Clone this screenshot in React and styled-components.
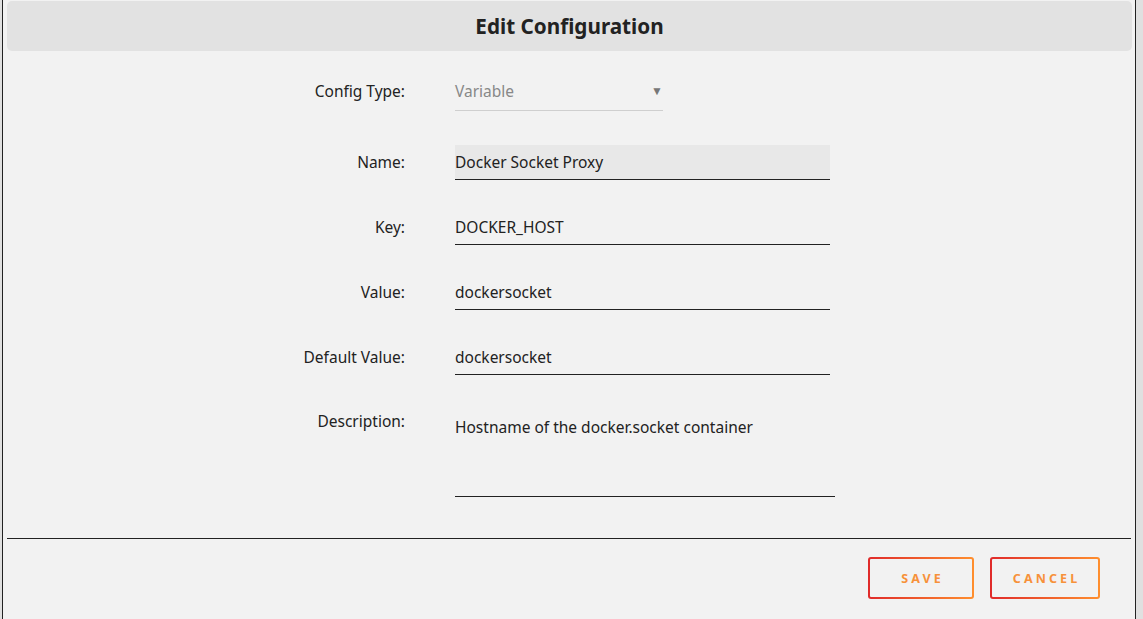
import React from "react";
import styled, { createGlobalStyle } from "styled-components";

const Global = createGlobalStyle`
  html, body { margin: 0; padding: 0; background: #e0e0e0; }
  body { font-family: "Noto Sans", "Liberation Sans", sans-serif; color: #222; }
  * { box-sizing: border-box; }
`;

const Dialog = styled.div`
  margin-left: 2px;
  width: 1134px;
  height: 619px;
  background: #f2f2f2;
  border-left: 1px solid #222;
  border-right: 1px solid #222;
  padding: 1px 3px 0 4px;
  display: flex;
  flex-direction: column;
`;

const Header = styled.div`
  height: 50px;
  flex-shrink: 0;
  background: #e2e2e2;
  border-radius: 5px;
  display: flex;
  align-items: center;
  justify-content: center;
  font-size: 20.7px;
  font-weight: 700;
  color: #222;
`;

const Form = styled.div`
  display: grid;
  grid-template-columns: 398px auto;
  column-gap: 50px;
  row-gap: 30px;
  align-items: center;
  justify-items: start;
  padding-top: 25px;
  height: 487px;
  flex-shrink: 0;
  align-content: start;
`;

const Label = styled.div`
  justify-self: end;
  font-size: 15.5px;
  line-height: 21px;
  color: #222;
  align-self: ${(p) => (p.$top != null ? "start" : "center")};
  padding-top: ${(p) => (p.$top != null ? `${p.$top}px` : "0")};
`;

const Select = styled.div`
  width: 208px;
  height: 35px;
  border-bottom: 1px solid #cfcfcf;
  display: flex;
  align-items: flex-start;
  justify-content: space-between;
  padding-top: 5px;
  font-size: 15.5px;
  line-height: 21px;
  color: #888;
  padding-right: 0;
  margin-bottom: 4px;
`;

const Arrow = styled.span`
  font-size: 12px;
  line-height: 19px;
  color: #777;
`;

const Input = styled.div`
  width: ${(p) => (p.$wide ? "380px" : "375px")};
  height: ${(p) => (p.$tall ? "92px" : "35px")};
  background: ${(p) => (p.$filled ? "#e8e8e8" : "transparent")};
  border-bottom: 1px solid #222;
  display: flex;
  align-items: ${(p) => (p.$tall ? "flex-start" : "center")};
  padding-top: ${(p) => (p.$tall ? "12px" : "0")};
  font-size: 15.5px;
  line-height: 21px;
  color: #222;
`;

const Divider = styled.div`
  height: 1px;
  flex-shrink: 0;
  background: #222;
  margin-right: 1px;
`;

const Footer = styled.div`
  display: flex;
  justify-content: flex-end;
  gap: 16px;
  padding: 18px 32px 0 0;
`;

const Button = styled.button`
  width: ${(p) => p.$w}px;
  height: 42px;
  border: 2px solid transparent;
  border-radius: 3px;
  background: linear-gradient(#f2f2f2, #f2f2f2) padding-box,
    linear-gradient(90deg, #e02a2a, #ff8f2e) border-box;
  color: #f7913a;
  font-family: "Noto Sans", "Liberation Sans", sans-serif;
  font-size: 12.5px;
  font-weight: 700;
  letter-spacing: 3.1px;
  padding: 0 0 0 3px;
  cursor: pointer;
`;

export default function App() {
  return (
    <>
      <Global />
      <Dialog>
        <Header>Edit Configuration</Header>
        <Form>
          <Label $top={5}>Config Type:</Label>
          <Select>
            Variable
            <Arrow>▼</Arrow>
          </Select>
          <Label>Name:</Label>
          <Input $filled>Docker Socket Proxy</Input>
          <Label>Key:</Label>
          <Input>DOCKER_HOST</Input>
          <Label>Value:</Label>
          <Input>dockersocket</Input>
          <Label>Default Value:</Label>
          <Input>dockersocket</Input>
          <Label $top={6}>Description:</Label>
          <Input $wide $tall>Hostname of the docker.socket container</Input>
        </Form>
        <Divider />
        <Footer>
          <Button $w={106}>SAVE</Button>
          <Button $w={110}>CANCEL</Button>
        </Footer>
      </Dialog>
    </>
  );
}
